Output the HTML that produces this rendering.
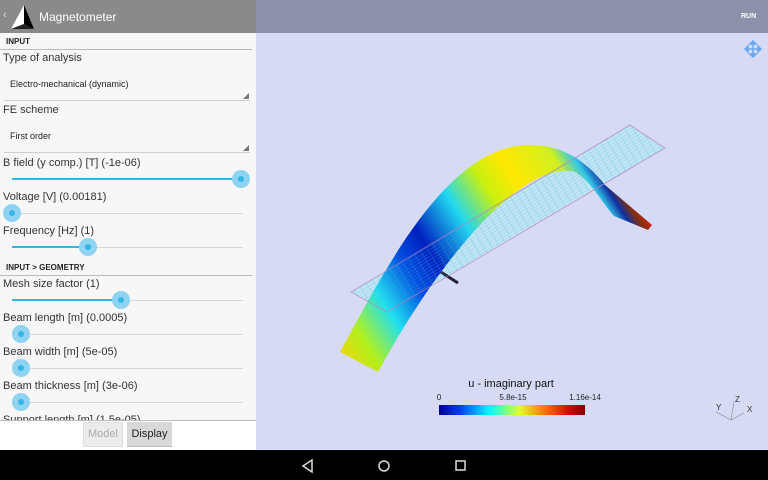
<!DOCTYPE html>
<html><head><meta charset="utf-8"><style>
*{margin:0;padding:0;box-sizing:border-box}
body{width:768px;height:480px;overflow:hidden;position:relative;font-family:"Liberation Sans",sans-serif;background:#fff}
.a{position:absolute;white-space:nowrap}
.lbl{font-size:11px;color:#333;left:3px}
.sec{font-size:8px;font-weight:bold;color:#222;left:6px}
.trk{position:absolute;left:12px;width:231px;height:1px;background:#d8d8d8}
.fill{position:absolute;left:12px;height:2px;background:#33b5e5}
.th{position:absolute;width:18px;height:18px;border-radius:50%;background:#8fd3f2}
.th:after{content:"";position:absolute;left:6px;top:6px;width:6px;height:6px;border-radius:50%;background:#33b5e5}
.ln{position:absolute;left:0;width:252px;height:1px;background:#cfcfcf}
</style></head><body>
<div class="a" style="left:0;top:0;width:256px;height:33px;background:#8a8a8a"></div>
<div class="a" style="left:256px;top:0;width:512px;height:33px;background:#8c90a8"></div>
<div class="a" style="left:3px;top:9px;color:#ddd;font-size:11px">‹</div>
<svg class="a" style="left:9px;top:4px" width="26" height="26" viewBox="0 0 26 26"><polygon points="15,1 2,25 15,20" fill="#fff"/><polygon points="15,1 15,20 25,25" fill="#000"/><polygon points="2,25 15,20 25,25" fill="#222"/></svg>
<div class="a" style="left:39px;top:10px;color:#fff;font-size:12px">Magnetometer</div>
<div class="a" style="left:741px;top:13px;color:#fff;font-size:7px;font-weight:bold">RUN</div>
<div class="a" style="left:256px;top:33px;width:512px;height:417px;background:#d6daf4"></div>
<div class="a" style="left:0;top:33px;width:256px;height:387px;background:#f7f7f7"></div>
<div class="a sec" style="top:37px">INPUT</div><div class="ln" style="top:49px;background:#bbb"></div>
<div class="a lbl" style="top:52px">Type of analysis</div>
<div class="a" style="left:10px;top:79px;font-size:9px;color:#222">Electro-mechanical (dynamic)</div>
<div class="ln" style="left:4px;top:100px;width:246px"></div>
<div class="a" style="left:243px;top:93px;width:0;height:0;border-left:6px solid transparent;border-bottom:6px solid #777"></div>
<div class="a lbl" style="top:104px">FE scheme</div>
<div class="a" style="left:10px;top:131px;font-size:9px;color:#222">First order</div>
<div class="ln" style="left:4px;top:152px;width:246px"></div>
<div class="a" style="left:243px;top:145px;width:0;height:0;border-left:6px solid transparent;border-bottom:6px solid #777"></div>
<div class="a lbl" style="top:157px">B field (y comp.) [T] (-1e-06)</div>
<div class="trk" style="top:179px"></div><div class="fill" style="top:178px;width:229px"></div><div class="th" style="left:232px;top:170px"></div>
<div class="a lbl" style="top:191px">Voltage [V] (0.00181)</div>
<div class="trk" style="top:213px"></div><div class="th" style="left:3px;top:204px"></div>
<div class="a lbl" style="top:225px">Frequency [Hz] (1)</div>
<div class="trk" style="top:247px"></div><div class="fill" style="top:246px;width:76px"></div><div class="th" style="left:79px;top:238px"></div>
<div class="a sec" style="top:263px">INPUT &gt; GEOMETRY</div><div class="ln" style="top:275px;background:#bbb"></div>
<div class="a lbl" style="top:278px">Mesh size factor (1)</div>
<div class="trk" style="top:300px"></div><div class="fill" style="top:299px;width:109px"></div><div class="th" style="left:112px;top:291px"></div>
<div class="a lbl" style="top:312px">Beam length [m] (0.0005)</div>
<div class="trk" style="top:334px"></div><div class="th" style="left:12px;top:325px"></div>
<div class="a lbl" style="top:346px">Beam width [m] (5e-05)</div>
<div class="trk" style="top:368px"></div><div class="th" style="left:12px;top:359px"></div>
<div class="a lbl" style="top:380px">Beam thickness [m] (3e-06)</div>
<div class="trk" style="top:402px"></div><div class="th" style="left:12px;top:393px"></div>
<div class="a" style="left:0;top:414px;width:256px;height:36px;overflow:hidden"><div class="a lbl" style="top:0">Support length [m] (1.5e-05)</div></div>
<div class="a" style="left:0;top:420px;width:256px;height:30px;background:#fff;border-top:1px solid #bbb"></div>
<div class="a" style="left:83px;top:422px;width:40px;height:25px;background:#ececec;border:1px solid #ddd;color:#aaa;font-size:11px;text-align:center;line-height:23px">Model</div>
<div class="a" style="left:127px;top:422px;width:45px;height:25px;background:#d8d8d8;border-bottom:1px solid #bbb;color:#222;font-size:11px;text-align:center;line-height:24px">Display</div>
<div class="a" style="left:0;top:450px;width:768px;height:30px;background:#000"></div>
<svg class="a" style="left:300px;top:458px" width="170" height="16"><polygon points="3,8 12,2 12,14" fill="none" stroke="#ddd" stroke-width="1.5"/><circle cx="84" cy="8" r="5" fill="none" stroke="#ddd" stroke-width="1.5"/><rect x="156" y="3" width="9" height="9" fill="none" stroke="#ddd" stroke-width="1.5"/></svg>
<svg class="a" style="left:744px;top:40px" width="18" height="18" viewBox="0 0 18 18" stroke="#6aa8ee" stroke-width="1.5" fill="#6aa8ee"><line x1="9" y1="2" x2="9" y2="16"/><line x1="2" y1="9" x2="16" y2="9"/><polygon points="9,1 6,4 12,4"/><polygon points="9,17 6,14 12,14"/><polygon points="1,9 4,6 4,12"/><polygon points="17,9 14,6 14,12"/></svg>
<svg class="a" style="left:256px;top:33px" width="512" height="417" viewBox="256 33 512 417">
<defs>
<linearGradient id="bg" x1="340" y1="370" x2="650" y2="170" gradientUnits="userSpaceOnUse">
<stop offset="0" stop-color="#ffd000"/><stop offset=".1" stop-color="#b0f020"/><stop offset=".2" stop-color="#20e0f0"/><stop offset=".3" stop-color="#0050e0"/><stop offset=".38" stop-color="#0020c0"/><stop offset=".5" stop-color="#20d8f0"/><stop offset=".6" stop-color="#c8f010"/><stop offset=".68" stop-color="#ffe800"/><stop offset=".8" stop-color="#d0f020"/><stop offset=".845" stop-color="#30c8e8"/><stop offset=".875" stop-color="#1030a0"/><stop offset=".9" stop-color="#803010"/><stop offset=".93" stop-color="#e02010"/><stop offset="1" stop-color="#e02010"/></linearGradient>
<linearGradient id="cb" x1="0" x2="1"><stop offset="0" stop-color="#00008f"/><stop offset=".15" stop-color="#0040ff"/><stop offset=".35" stop-color="#00ffff"/><stop offset=".55" stop-color="#e0ff20"/><stop offset=".75" stop-color="#ff6000"/><stop offset=".9" stop-color="#d00000"/><stop offset="1" stop-color="#800000"/></linearGradient>
<pattern id="gr" width="7" height="3" patternUnits="userSpaceOnUse" patternTransform="rotate(-31)"><path d="M0 0H7M0 0V3" stroke="#40b8e8" stroke-width=".6" fill="none"/></pattern>
</defs>
<polygon points="351,292 630,125 665,148 387,312" fill="#b8ecf4" opacity=".6"/>
<line x1="402" y1="247" x2="458" y2="283" stroke="#223" stroke-width="3"/>
<path d="M340,352 C385,270 445,150 525,145 C560,143 585,160 605,185 L652,225 L648,230 L614,216 C600,200 590,180 575,172 C530,160 450,240 378,372 Z" fill="url(#bg)"/>
<polygon points="351,292 630,125 665,148 387,312" fill="url(#gr)" opacity=".8" stroke="#c080c0" stroke-width=".8"/>
<text x="511" y="387" font-size="11" text-anchor="middle" fill="#111">u - imaginary part</text>
<text x="439" y="400" font-size="8" text-anchor="middle" fill="#222">0</text>
<text x="513" y="400" font-size="8" text-anchor="middle" fill="#222">5.8e-15</text>
<text x="585" y="400" font-size="8" text-anchor="middle" fill="#222">1.16e-14</text>
<rect x="439" y="405" width="146" height="10" fill="url(#cb)"/>
<g stroke="#888" stroke-width=".6" fill="none"><line x1="731" y1="420" x2="716" y2="412"/><line x1="731" y1="420" x2="744" y2="413"/><line x1="731" y1="420" x2="734" y2="402"/></g>
<text x="716" y="410" font-size="8" fill="#333">Y</text><text x="735" y="402" font-size="8" fill="#333">Z</text><text x="747" y="412" font-size="8" fill="#333">X</text>
</svg>
</body></html>
